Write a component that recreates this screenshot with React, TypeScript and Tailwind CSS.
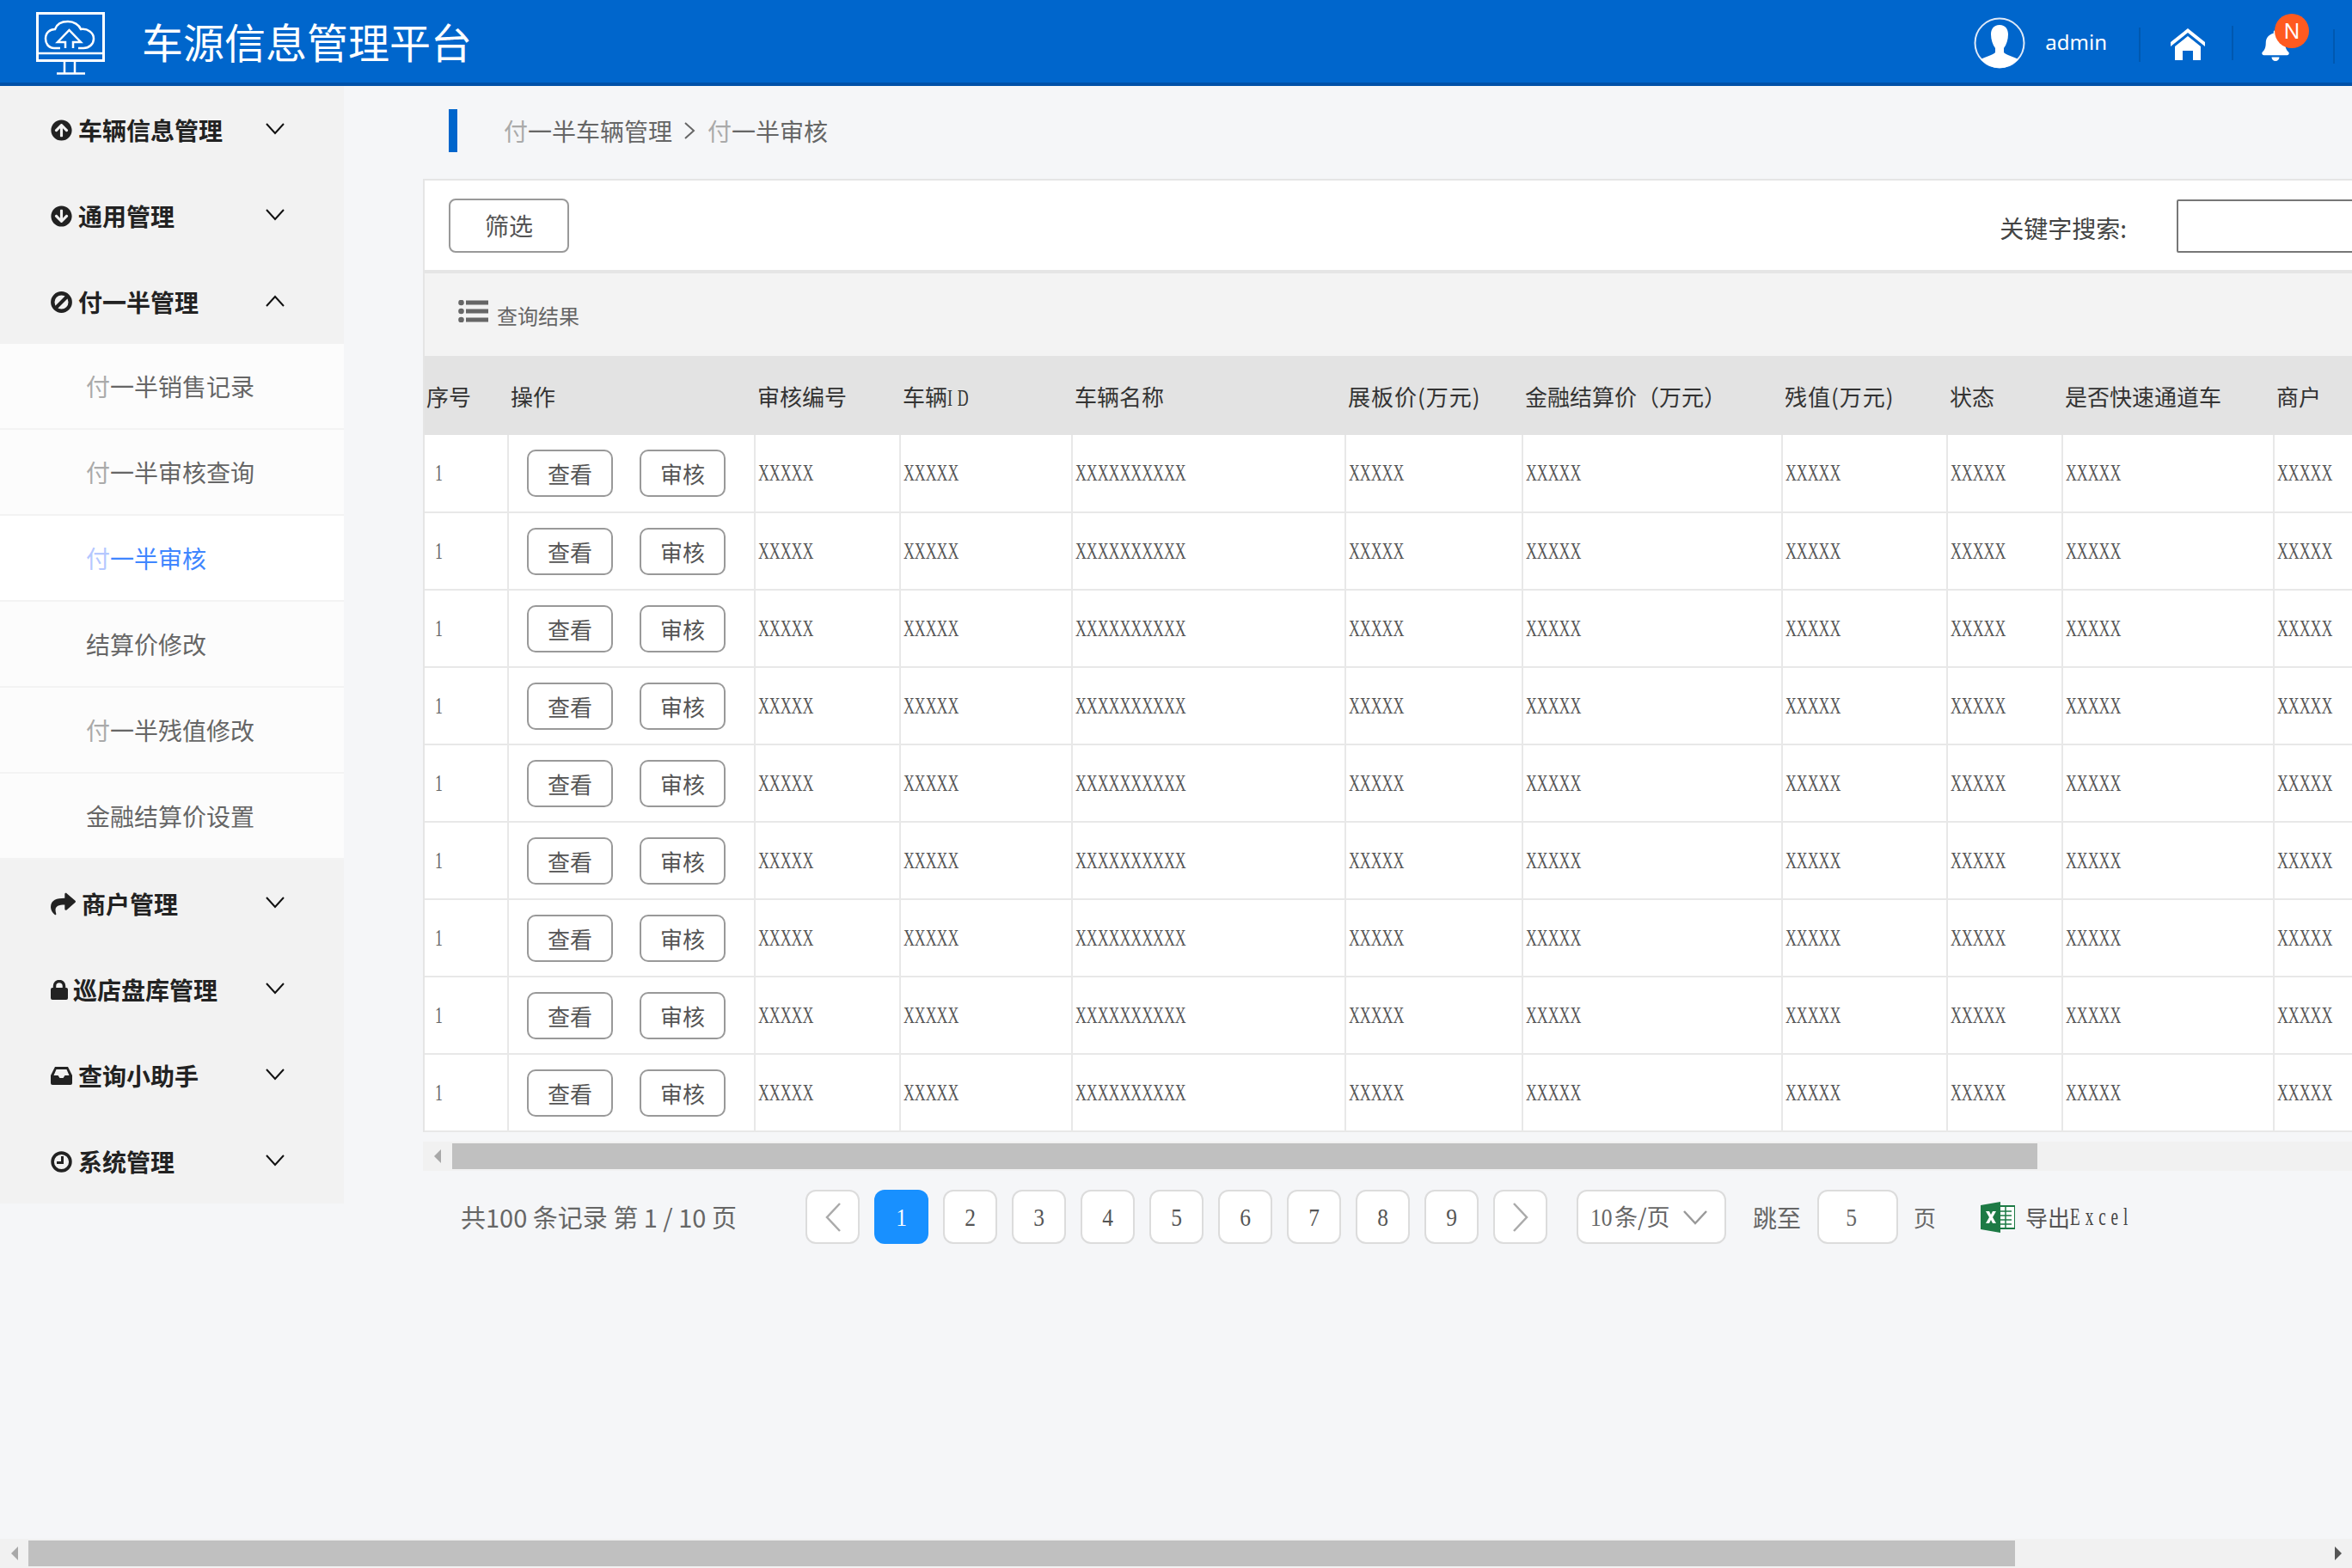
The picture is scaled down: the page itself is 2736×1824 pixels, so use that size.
import { FaArrowCircleDown, FaArrowCircleUp, FaBell, FaShare } from "react-icons/fa";
import type { ReactNode } from "react";

const cjk = "font-['Noto_Sans_CJK_SC','Noto_Sans',sans-serif]";

const subMenu = ["付一半销售记录", "付一半审核查询", "付一半审核", "结算价修改", "付一半残值修改", "金融结算价设置"];

const columns: { key: string; title: ReactNode; width: string; wide?: boolean }[] = [
  { key: "no", title: "序号", width: "w-[97px]" },
  { key: "op", title: "操作", width: "w-[287px]" },
  { key: "code", title: "审核编号", width: "w-[169px]" },
  { key: "id", title: <>车辆<Narrow className="tracking-[9px]">ID</Narrow></>, width: "w-[200px]" },
  { key: "name", title: "车辆名称", width: "w-[318px]" },
  { key: "price", title: "展板价(万元)", width: "w-[206px]", wide: true },
  { key: "settle", title: "金融结算价（万元）", width: "w-[302px]" },
  { key: "rest", title: "残值(万元)", width: "w-[192px]", wide: true },
  { key: "state", title: "状态", width: "w-[134px]" },
  { key: "fast", title: "是否快速通道车", width: "w-[246px]" },
  { key: "shop", title: "商户", width: "w-[200px]" },
];

const rows = [1, 2, 3, 4, 5, 6, 7, 8, 9];
const cells = ["XXXXX", "XXXXX", "XXXXXXXXXX", "XXXXX", "XXXXX", "XXXXX", "XXXXX", "XXXXX", "XXXXX"];

// tall narrow latin, same proportions as the SimSun digits in the table
function Narrow({ children, className = "" }: { children: ReactNode; className?: string }) {
  return (
    <span className={`inline-block origin-left scale-x-[0.66] whitespace-nowrap font-['Liberation_Serif',serif] text-[27px] leading-none ${className}`}>
      {children}
    </span>
  );
}

// the first glyph of 付 renders paler in the screenshot
function MenuText({ text, pale = "text-[#aaa]" }: { text: string; pale?: string }) {
  if (!text.startsWith("付")) return <>{text}</>;
  return (
    <>
      <span className={pale}>付</span>
      {text.slice(1)}
    </>
  );
}

function BanIcon() {
  return (
    <svg width="25" height="25" viewBox="0 0 25 25" fill="none" stroke="#222">
      <circle cx="12.5" cy="12.5" r="10.2" strokeWidth="4.4" />
      <line x1="6" y1="19" x2="19" y2="6" strokeWidth="4" />
    </svg>
  );
}

function LockIcon() {
  return (
    <svg width="20" height="23" viewBox="0 0 20 23">
      <rect y="9" width="20" height="14" rx="2" fill="#222" />
      <path d="M4.5 10V7a5.5 5.5 0 0 1 11 0v3" fill="none" stroke="#222" strokeWidth="3.5" />
    </svg>
  );
}

function InboxIcon() {
  return (
    <svg width="25" height="21" viewBox="0 0 25 21">
      <path d="M5 0h15l5 10v9a2 2 0 0 1-2 2H2a2 2 0 0 1-2-2V10z" fill="#222" />
      <path d="M6.5 3h12l3 7h-5l-2 3h-4l-2-3h-5z" fill="#f2f2f2" />
    </svg>
  );
}

function ClockIcon() {
  return (
    <svg width="25" height="25" viewBox="0 0 25 25" fill="none" stroke="#222">
      <circle cx="12.5" cy="12.5" r="10.4" strokeWidth="3.6" />
      <path d="M13.5 6v7.5H7" strokeWidth="3" />
    </svg>
  );
}

function Chevron({ up = false }: { up?: boolean }) {
  return (
    <svg width="22" height="14" viewBox="0 0 22 14" fill="none" stroke="#111" strokeWidth="2" className="absolute right-[69px] top-[43px]">
      <polyline points={up ? "1,13 11,2 21,13" : "1,1 11,12 21,1"} />
    </svg>
  );
}

function MenuGroup({ icon, label, up, gap = "gap-[7px]" }: { icon: ReactNode; label: string; up?: boolean; gap?: string }) {
  return (
    <div className="relative flex h-[100px] items-center pl-[59px] pt-[2px] text-[28px] font-bold text-[#222]">
      <span className={`flex items-center ${gap}`}>
        {icon}
        {label}
      </span>
      <Chevron up={up} />
    </div>
  );
}

function OpButton({ label }: { label: string }) {
  return (
    <button className="flex h-[55px] w-[100px] items-center justify-center rounded-[10px] border-2 border-[#999] bg-white text-[26px] text-[#555]">
      {label}
    </button>
  );
}

function PageButton({ children, active }: { children: ReactNode; active?: boolean }) {
  return (
    <div className={`flex h-[63px] w-[63px] items-center justify-center rounded-[12px] ${active ? "bg-[#1890ff] text-white" : "border-2 border-[#dcdcdc] bg-white text-[#555]"}`}>
      {children}
    </div>
  );
}

function PageNumber({ n }: { n: number }) {
  return <span className="inline-block scale-x-[0.85] font-['Liberation_Serif',serif] text-[30px] leading-none">{n}</span>;
}

function Arrow({ dir, color = "#a8a8a8" }: { dir: "left" | "right"; color?: string }) {
  return (
    <svg width="8" height="16" viewBox="0 0 8 16" fill={color}>
      <polygon points={dir === "left" ? "8,0 8,16 0,8" : "0,0 0,16 8,8"} />
    </svg>
  );
}

export default function App() {
  return (
    <div className={`flex h-[1824px] w-[2736px] flex-col overflow-hidden bg-[#f5f6f8] ${cjk}`}>
      {/* top bar */}
      <header className="relative flex h-[100px] shrink-0 items-center border-b-4 border-[#0051a8] bg-[#0066cc] pl-[42px] text-white">
        <svg width="80" height="73" viewBox="0 0 80 73" fill="none" stroke="#fff" strokeWidth="2.5" className="mt-[4px]">
          <rect x="1.5" y="1.5" width="77" height="55" strokeWidth="3" />
          <line x1="2" y1="48" x2="78" y2="48" />
          <path d="M33 57v14M45 57v14M24 71.5h33" />
          <path d="M28 42H21C14 42 11 36 11 31C11 24 16 20 22 20C24 14 30 11 37 11C44 11 50 15 52 20C60 19 67 24 67 31C67 37 62 42 55 42H49" />
          <path d="M34 42V35H25L38.5 21L52 35H43V42" />
        </svg>
        <span className="mb-[2px] ml-[43px] text-[48px] leading-none">车源信息管理平台</span>

        <div className="ml-auto flex h-full items-center">
          <svg width="60" height="60" viewBox="0 0 60 60" className="mr-[23px] mt-[4px]">
            <circle cx="30" cy="30" r="28.5" fill="none" stroke="#dfe9f7" strokeWidth="2" />
            <path
              d="M30 9c-7 0-10 5-10 11 0 6 2 12 5 16v5c-2 3-12 5-17 8a29 29 0 0 0 44 0c-5-3-15-5-17-8v-5c3-4 5-10 5-16 0-6-3-11-10-11z"
              fill="#fff"
            />
          </svg>
          <span className="mr-[37px] mt-[2px] font-['Noto_Sans',sans-serif] text-[24px]">admin</span>
          <div className="mr-[35px] mt-[8px] h-[40px] w-[2px] bg-[#0058b0]" />
          <svg width="40" height="37" viewBox="0 0 40 37" fill="#fff" className="mr-[31px] mt-[7px]">
            <path d="M20 0 0 16v5L20 5l20 16v-5z" />
            <path d="M5 21 20 9l15 12v16H26V26H14v11H5z" />
          </svg>
          <div className="mr-[31px] mt-[4px] h-[40px] w-[2px] bg-[#0058b0]" />
          <FaBell className="mr-[49px] mt-[10px] text-[36px]" />
          <div className="mr-[20px] mt-[11px] h-[40px] w-[2px] bg-[#0058b0]" />
          <span className="absolute right-[50px] top-[16px] flex h-[40px] w-[40px] items-center justify-center rounded-full bg-[#ff5a1f] font-['Noto_Sans',sans-serif] text-[25px]">
            N
          </span>
        </div>
      </header>

      <div className="flex min-h-0 flex-1">
        {/* side menu */}
        <aside className="w-[400px] shrink-0 self-start bg-[#f2f2f2]">
          <MenuGroup icon={<FaArrowCircleUp className="text-[25px]" />} label="车辆信息管理" />
          <MenuGroup icon={<FaArrowCircleDown className="text-[25px]" />} label="通用管理" />
          <MenuGroup icon={<BanIcon />} label="付一半管理" up />
          <div>
            {subMenu.map((item, i) => (
              <div
                key={item}
                className={`flex h-[100px] items-center border-b-2 border-[#f3f3f3] pl-[100px] text-[28px] ${i === 2 ? "bg-white text-[#3f86ff]" : "bg-[#fcfcfc] text-[#666]"}`}
              >
                <MenuText text={item} pale={i === 2 ? "text-[#b5c8ff]" : "text-[#aaa]"} />
              </div>
            ))}
          </div>
          <MenuGroup icon={<FaShare className="text-[29px]" />} label="商户管理" />
          <MenuGroup icon={<LockIcon />} label="巡店盘库管理" gap="gap-[6px]" />
          <MenuGroup icon={<InboxIcon />} label="查询小助手" />
          <MenuGroup icon={<ClockIcon />} label="系统管理" />
        </aside>

        {/* content */}
        <main className="flex min-w-0 flex-1 flex-col pl-[92px]">
          <div className="flex h-[108px] shrink-0 items-center pl-[30px] pb-[4px]">
            <div className="h-[50px] w-[10px] bg-[#0066cc]" />
            <div className="ml-[54px] flex items-center text-[28px] text-[#666]">
              <MenuText text="付一半车辆管理" />
              <svg width="14" height="22" viewBox="0 0 14 22" fill="none" stroke="#666" strokeWidth="2" className="ml-[13px] mr-[14px]">
                <polyline points="2,2 12,11 2,20" />
              </svg>
              <MenuText text="付一半审核" />
            </div>
          </div>

          <section className="border-l-2 border-t-2 border-[#e5e5e5]">
            <div className="flex h-[108px] items-center border-b-[4px] border-[#e5e5e5] bg-white pl-[28px]">
              <button className="flex h-[63px] w-[140px] items-center justify-center rounded-[8px] border-2 border-[#999] text-[28px] text-[#555]">
                筛选
              </button>
              <span className="ml-auto mt-[6px] text-[28px] text-[#444]">关键字搜索:</span>
              <input className="ml-[58px] mr-[-60px] mt-[2px] h-[62px] w-[264px] rounded-[2px] border-2 border-[#777] bg-white" />
            </div>

            <div className="flex h-[96px] items-center gap-[10px] bg-[#f3f3f3] pl-[39px] text-[24px] text-[#666]">
              <svg width="35" height="26" viewBox="0 0 35 26" fill="#666" className="mb-[8px]">
                <circle cx="3.5" cy="3" r="3.3" />
                <circle cx="3.5" cy="13" r="3.3" />
                <circle cx="3.5" cy="23" r="3.3" />
                <rect x="9" y="0.5" width="26" height="5" />
                <rect x="9" y="10.5" width="26" height="5" />
                <rect x="9" y="20.5" width="26" height="5" />
              </svg>
              <span className="mt-[2px]">查询结果</span>
            </div>

            <div className="w-[2242px] overflow-hidden">
              <table className="w-[2351px] table-fixed border-collapse">
                <colgroup>
                  {columns.map((c) => (
                    <col key={c.key} className={c.width} />
                  ))}
                </colgroup>
                <thead>
                  <tr className="h-[92px] bg-[#e3e3e3]">
                    {columns.map((c, i) => (
                      <th
                        key={c.key}
                        className={`whitespace-nowrap text-left text-[26px] font-normal text-[#333] ${i === 0 ? "pl-[2px]" : "pl-[3px]"} ${c.wide ? "tracking-[1px]" : ""}`}
                      >
                        {c.title}
                      </th>
                    ))}
                  </tr>
                </thead>
                <tbody>
                  {rows.map((r) => (
                    <tr key={r} className="h-[90px] border-b-2 border-[#e8e8e8] bg-white">
                      <td className="border-r-2 border-[#e8e8e8] pl-[12px]">
                        <Narrow className="text-[#666]">1</Narrow>
                      </td>
                      <td className="border-r-2 border-[#e8e8e8] pl-[21px]">
                        <div className="flex gap-[31px]">
                          <OpButton label="查看" />
                          <OpButton label="审核" />
                        </div>
                      </td>
                      {cells.map((text, i) => (
                        <td key={i} className="border-r-2 border-[#e8e8e8] pl-[3px]">
                          <Narrow className="text-[#555]">{text}</Narrow>
                        </td>
                      ))}
                    </tr>
                  ))}
                </tbody>
              </table>
            </div>
          </section>

          {/* table scrollbar */}
          <div className="mt-[11px] flex h-[34px] items-center bg-[#f1f1f1] py-[2px]">
            <div className="flex w-[34px] justify-center">
              <Arrow dir="left" />
            </div>
            <div className="h-full w-[1844px] bg-[#c0c0c0]" />
          </div>

          {/* pagination */}
          <div className="mt-[22px] flex h-[63px] items-center text-[#666]">
            <span className="ml-[44px] w-[401px] whitespace-nowrap text-[29px] leading-none">共100 条记录 第 1 / 10 页</span>
            <div className="flex gap-[17px]">
              <PageButton>
                <svg width="20" height="36" viewBox="0 0 20 36" fill="none" stroke="#aaa" strokeWidth="2.5">
                  <polyline points="18,2 3,18 18,34" />
                </svg>
              </PageButton>
              <PageButton active>
                <PageNumber n={1} />
              </PageButton>
              {[2, 3, 4, 5, 6, 7, 8, 9].map((n) => (
                <PageButton key={n}>
                  <PageNumber n={n} />
                </PageButton>
              ))}
              <PageButton>
                <svg width="20" height="36" viewBox="0 0 20 36" fill="none" stroke="#aaa" strokeWidth="2.5">
                  <polyline points="2,2 17,18 2,34" />
                </svg>
              </PageButton>
            </div>
            <div className="ml-[34px] flex h-[63px] w-[174px] items-center rounded-[12px] border-2 border-[#dcdcdc] bg-white pl-[14px] text-[27px]">
              <span className="inline-block w-[28px] origin-left scale-x-[0.85] font-['Liberation_Serif',serif] text-[30px] leading-none">10</span>
              <span className="whitespace-nowrap">条/页</span>
              <svg width="30" height="18" viewBox="0 0 30 18" fill="none" stroke="#999" strokeWidth="2.5" className="ml-[14px]">
                <polyline points="2,2 15,16 28,2" />
              </svg>
            </div>
            <span className="ml-[31px] text-[28px]">跳至</span>
            <div className="ml-[19px] flex h-[63px] w-[94px] items-center rounded-[12px] border-2 border-[#dcdcdc] bg-white pl-[30px]">
              <PageNumber n={5} />
            </div>
            <span className="ml-[18px] text-[26px]">页</span>
            <svg width="40" height="36" viewBox="0 0 40 36" className="ml-[52px]">
              <rect x="18" y="5" width="22" height="26" fill="#fff" stroke="#1d7a45" strokeWidth="2" />
              <path d="M22 11h14M22 16h14M22 21h14M22 26h14M29 6v24" stroke="#1d7a45" strokeWidth="1.5" />
              <path d="M0 4 23 0v36L0 32z" fill="#1d7a45" />
              <path d="m6 11 4 0 2 4 2-4 4 0-4 7 4 7h-4l-2-4-2 4H6l4-7z" fill="#fff" />
            </svg>
            <span className="ml-[12px] text-[26px] text-[#555]">导出</span>
            <Narrow className="text-[#444]">
              <span className="text-[29px] tracking-[9px]">Excel</span>
            </Narrow>
          </div>
        </main>
      </div>

      {/* page scrollbar */}
      <div className="flex h-[34px] shrink-0 items-center justify-between bg-[#f1f1f1]">
        <div className="flex h-full items-center">
          <div className="flex w-[33px] justify-center">
            <Arrow dir="left" />
          </div>
          <div className="h-[30px] w-[2311px] bg-[#c0c0c0]" />
        </div>
        <div className="pr-[12px]">
          <Arrow dir="right" color="#555" />
        </div>
      </div>
    </div>
  );
}
